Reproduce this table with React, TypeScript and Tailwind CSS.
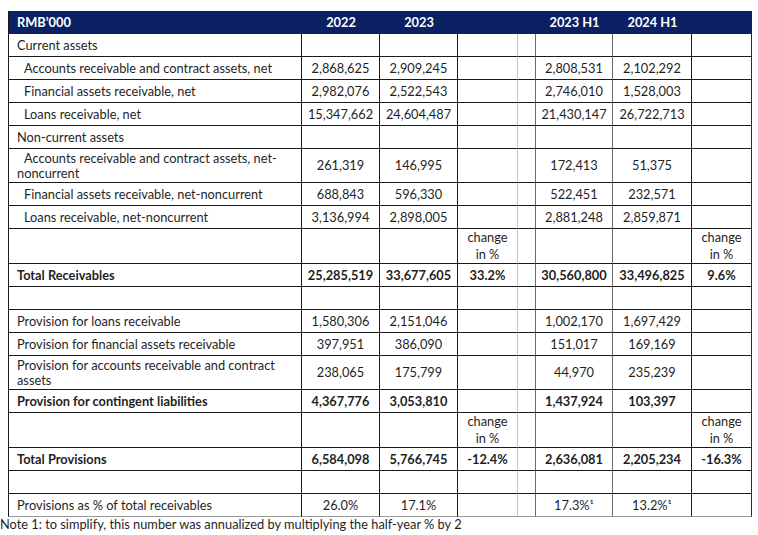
type Row = {
  label: string;
  indent?: boolean;
  bold?: boolean;
  tall?: boolean;
  cells?: string[];
  change?: boolean;
  last?: boolean;
};

const rows: Row[] = [
  { label: 'Current assets' },
  { label: 'Accounts receivable and contract assets, net', indent: true, cells: ['2,868,625', '2,909,245', '', '2,808,531', '2,102,292', ''] },
  { label: 'Financial assets receivable, net', indent: true, cells: ['2,982,076', '2,522,543', '', '2,746,010', '1,528,003', ''] },
  { label: 'Loans receivable, net', indent: true, cells: ['15,347,662', '24,604,487', '', '21,430,147', '26,722,713', ''] },
  { label: 'Non-current assets' },
  { label: 'Accounts receivable and contract assets, net-noncurrent', indent: true, tall: true, cells: ['261,319', '146,995', '', '172,413', '51,375', ''] },
  { label: 'Financial assets receivable, net-noncurrent', indent: true, cells: ['688,843', '596,330', '', '522,451', '232,571', ''] },
  { label: 'Loans receivable, net-noncurrent', indent: true, cells: ['3,136,994', '2,898,005', '', '2,881,248', '2,859,871', ''] },
  { label: '', tall: true, change: true },
  { label: 'Total Receivables', bold: true, cells: ['25,285,519', '33,677,605', '33.2%', '30,560,800', '33,496,825', '9.6%'] },
  { label: '' },
  { label: 'Provision for loans receivable', cells: ['1,580,306', '2,151,046', '', '1,002,170', '1,697,429', ''] },
  { label: 'Provision for financial assets receivable', cells: ['397,951', '386,090', '', '151,017', '169,169', ''] },
  { label: 'Provision for accounts receivable and contract assets', tall: true, cells: ['238,065', '175,799', '', '44,970', '235,239', ''] },
  { label: 'Provision for contingent liabilities', bold: true, cells: ['4,367,776', '3,053,810', '', '1,437,924', '103,397', ''] },
  { label: '', tall: true, change: true },
  { label: 'Total Provisions', bold: true, cells: ['6,584,098', '5,766,745', '-12.4%', '2,636,081', '2,205,234', '-16.3%'] },
  { label: '' },
  { label: 'Provisions as % of total receivables', last: true, cells: ['26.0%', '17.1%', '', '17.3%¹', '13.2%¹', ''] },
];

// right border colour per column: label, 2022, 2023, chg, gap, H1 23, H1 24, chg
const rightBorder = [
  'border-r-[#1a1a1a]',
  'border-r-[#1a1a1a]',
  'border-r-[#1a1a1a]',
  'border-r-[#c4c4c4]',
  'border-r-[#6a6a6a]',
  'border-r-[#6a6a6a]',
  'border-r-[#1a1a1a]',
  'border-r-[#2a2a2a]',
];

function Cell({ col, row, children }: { col: number; row: Row; children?: React.ReactNode }) {
  return (
    <td
      className={`border-r border-b p-0 text-center align-middle ${rightBorder[col]} ${
        row.last ? 'border-b-[#9a9a9a]' : 'border-b-[#1a1a1a]'
      } ${row.bold ? 'font-bold' : ''} ${row.change ? 'leading-[17px]' : ''}`}
    >
      {children}
    </td>
  );
}

export default function App() {
  return (
    <div className="h-[535px] w-[758px] bg-white pt-[11px] font-['Lato','Noto_Sans',sans-serif] text-[12.8px] leading-[15px] text-[#1f1f1f]">
      <table className="ml-[8px] table-fixed border-separate border-spacing-0">
        <colgroup>
          <col className="w-[294px]" />
          <col className="w-[78px]" />
          <col className="w-[78px]" />
          <col className="w-[60px]" />
          <col className="w-[18px]" />
          <col className="w-[77px]" />
          <col className="w-[79px]" />
          <col className="w-[60px]" />
        </colgroup>
        <thead>
          <tr className="h-[23px] bg-[#0c2163] font-bold text-white">
            <th className="border-l border-l-[#1a1a1a] pl-[8px] text-left">RMB’000</th>
            <th>2022</th>
            <th>2023</th>
            <th />
            <th />
            <th>2023 H1</th>
            <th>2024 H1</th>
            <th />
          </tr>
        </thead>
        <tbody>
          {rows.map((row, i) => (
            <tr key={i} className={row.change ? 'h-[35px]' : row.tall ? 'h-[34px]' : 'h-[23px]'}>
              <td
                className={`border-r border-b border-l border-l-[#1a1a1a] p-0 pr-[6px] pl-[8px] text-left align-middle ${rightBorder[0]} ${
                  row.last ? 'border-b-[#9a9a9a]' : 'border-b-[#1a1a1a]'
                } ${row.bold ? 'font-bold' : ''} ${row.indent ? 'indent-[7px]' : ''}`}
              >
                {row.label}
              </td>
              {row.change ? (
                <>
                  <Cell col={1} row={row} />
                  <Cell col={2} row={row} />
                  <Cell col={3} row={row}>
                    change
                    <br />
                    in %
                  </Cell>
                  <Cell col={4} row={row} />
                  <Cell col={5} row={row} />
                  <Cell col={6} row={row} />
                  <Cell col={7} row={row}>
                    change
                    <br />
                    in %
                  </Cell>
                </>
              ) : (
                <>
                  <Cell col={1} row={row}>{row.cells?.[0]}</Cell>
                  <Cell col={2} row={row}>{row.cells?.[1]}</Cell>
                  <Cell col={3} row={row}>{row.cells?.[2]}</Cell>
                  <Cell col={4} row={row} />
                  <Cell col={5} row={row}>{row.cells?.[3]}</Cell>
                  <Cell col={6} row={row}>{row.cells?.[4]}</Cell>
                  <Cell col={7} row={row}>{row.cells?.[5]}</Cell>
                </>
              )}
            </tr>
          ))}
        </tbody>
      </table>
      <p>Note 1: to simplify, this number was annualized by multiplying the half-year % by 2</p>
    </div>
  );
}
